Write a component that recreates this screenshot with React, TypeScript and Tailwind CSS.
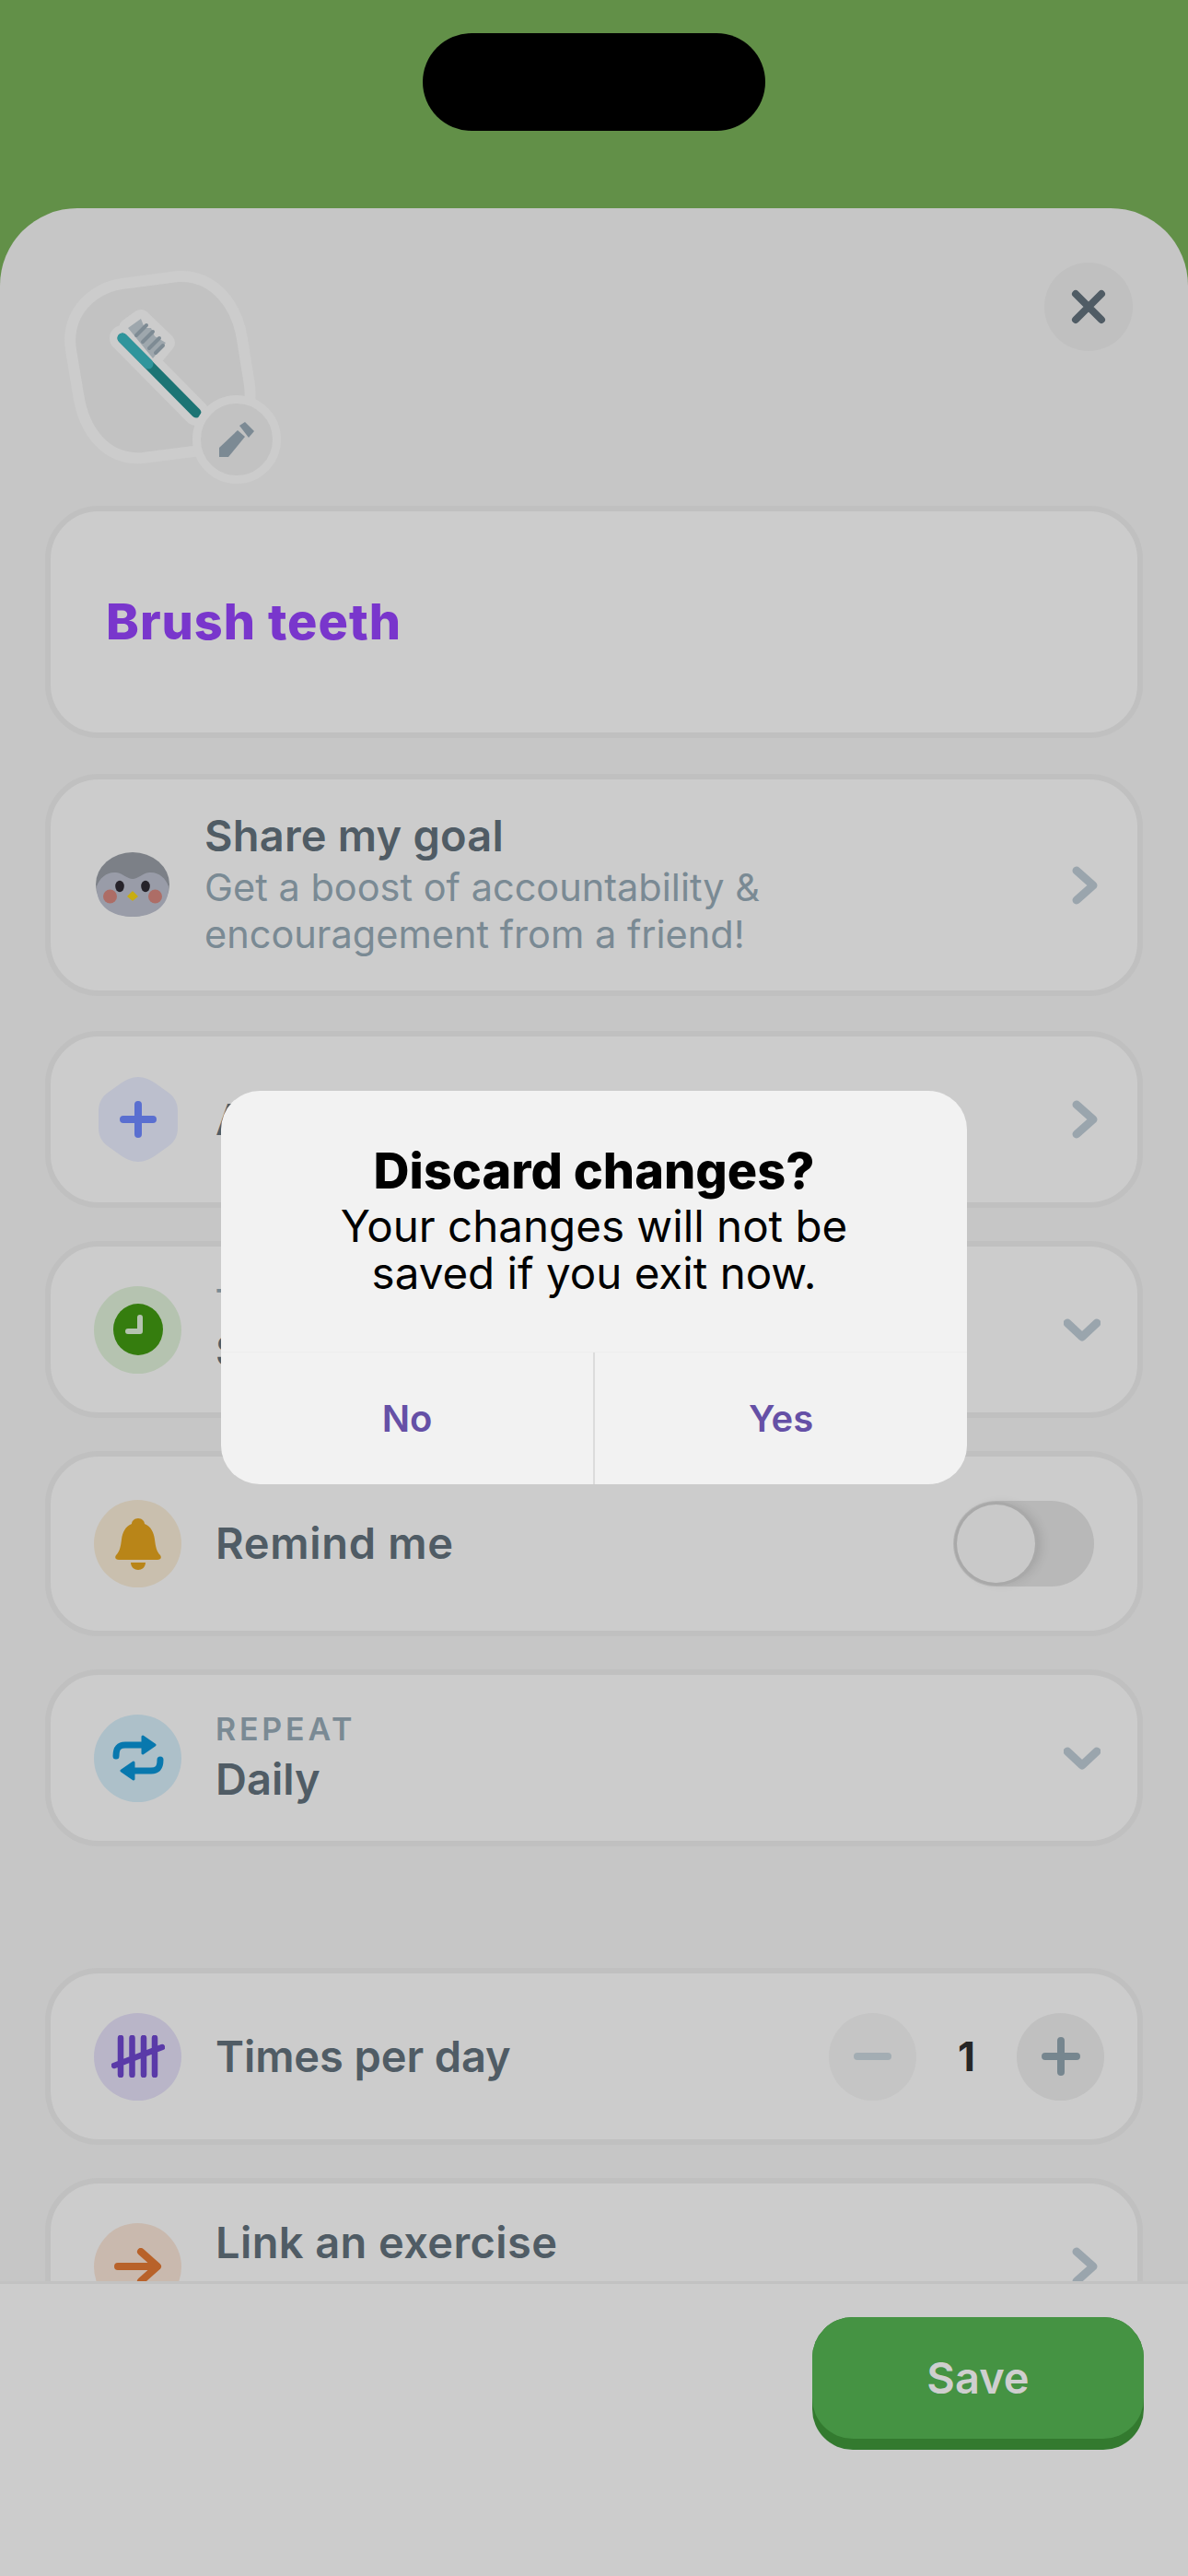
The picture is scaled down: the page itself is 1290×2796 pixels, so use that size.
import React from 'react';

const ChevronRight = () => (
  <svg width="28" height="42" viewBox="0 0 28 42" fill="none" className="shrink-0">
    <path d="M5 5 L23 21 L5 37" stroke="#9aa5ad" strokeWidth="9" strokeLinecap="round" strokeLinejoin="round" />
  </svg>
);

const ChevronDown = () => (
  <svg width="40" height="28" viewBox="0 0 40 28" fill="none" className="shrink-0 mt-[2px]">
    <path d="M4 6 L20 21 L36 6" stroke="#9aa5ad" strokeWidth="9" strokeLinecap="round" strokeLinejoin="round" />
  </svg>
);

const Emblem = () => (
  <svg width="260" height="260" viewBox="0 0 260 260" fill="none" className="shrink-0">
    <path
      d="M133 20 C172 18 197 50 203 88 L211 138 C216 180 190 205 150 210 L95 217 C55 220 31 188 25 148 L17 100 C11 58 42 30 80 27 Z"
      fill="#c2c2c2"
      stroke="#cccccc"
      strokeWidth="12"
    />
    <path d="M79 76 L93 66 L120 92 L106 109 Z" fill="#cccccc" stroke="#cccccc" strokeWidth="20" strokeLinejoin="round" />
    <path d="M73 87 L153 168" stroke="#cccccc" strokeWidth="28" strokeLinecap="round" />
    <path d="M79 76 L93 66 L97 76 L104 76 L108 85 L120 92 L106 109 Z" fill="#9ea7ad" />
    <path d="M88 84 L99 73 M95 91 L106 80 M102 98 L113 87 M109 103 L117 95" stroke="#7e8b94" strokeWidth="4" strokeLinecap="round" />
    <path d="M73 87 L153 168" stroke="#1c7474" strokeWidth="11" strokeLinecap="round" />
    <path d="M73 87 L101 115" stroke="#2f959c" strokeWidth="11" strokeLinecap="round" />
    <circle cx="197" cy="197" r="43.5" fill="#c2c2c2" stroke="#cccccc" strokeWidth="9" />
    <path d="M178 206 L198 187 L206 194 L188 216 L178 216 Z" fill="#7c8a94" />
    <path d="M200 182 L206 178 L216 188 L210 195 Z" fill="#7c8a94" />
  </svg>
);

const Penguin = () => (
  <svg width="80" height="71" viewBox="14 25 80 71" className="shrink-0">
    <ellipse cx="54" cy="60" rx="40" ry="35" fill="#7c8087" />
    <path d="M15 62 C18 53 26 46 36 47 C44 48 48 54 54 54 C60 54 64 48 72 47 C82 46 90 53 93 62 C94 84 76 95 54 95 C32 95 14 84 15 62 Z" fill="#999ca8" />
    <ellipse cx="40" cy="62" rx="4.8" ry="6.2" fill="#26232a" />
    <ellipse cx="68" cy="62" rx="4.8" ry="6.2" fill="#26232a" />
    <circle cx="29.5" cy="73" r="7.5" fill="#ad6d66" />
    <circle cx="78.5" cy="73" r="7.5" fill="#ad6d66" />
    <path d="M49 73 L54 68 L59 73 L54 77 Z" fill="#c8ad10" stroke="#c8ad10" strokeWidth="1.5" strokeLinejoin="round" />
  </svg>
);

const IconCircle = ({ bg, children }: { bg: string; children: React.ReactNode }) => (
  <div className={`w-[95px] h-[95px] rounded-full shrink-0 flex items-center justify-center ${bg}`}>{children}</div>
);

const Card = ({ className = '', children }: { className?: string; children: React.ReactNode }) => (
  <div className={`border-[6px] border-[#c0c0c0] bg-[#cccccc] rounded-[58px] flex items-center shrink-0 ${className}`}>
    {children}
  </div>
);

const StackedLabel = ({ label, value }: { label: string; value: string }) => (
  <div className="flex flex-col gap-[4px] ml-[37px] flex-1 -mt-[3px]">
    <span className="text-[34px] leading-[44px] font-semibold tracking-[3.800px] text-[#7a8a94]">{label}</span>
    <span className="text-[47px] leading-[56px] font-semibold text-[#505c65]">{value}</span>
  </div>
);

const titleText = 'ml-[37px] flex-1 text-[47px] font-semibold text-[#505c65]';

export default function App() {
  return (
    <div className="relative w-[1290px] h-[2796px] overflow-hidden bg-[#629048] flex flex-col font-[Inter,sans-serif]">
      {/* Status area */}
      <div className="h-[226px] shrink-0 flex justify-center pt-[36px]">
        <div className="w-[372px] h-[106px] rounded-full bg-black" />
      </div>

      {/* Sheet */}
      <div className="flex-1 min-h-0 flex flex-col bg-[#c6c6c6] rounded-t-[84px] overflow-hidden">
        <div className="flex-1 min-h-0 overflow-hidden px-[49px] pt-[54px] flex flex-col">
          <div className="flex justify-between items-start -mx-[49px] pl-[60px] pr-[60px] shrink-0">
            <Emblem />
            <div className="mt-[5px] w-[96px] h-[96px] rounded-full bg-[#c0c0c0] flex items-center justify-center">
              <svg width="44" height="44" viewBox="0 0 44 44" fill="none">
                <path d="M8 8 L36 36 M36 8 L8 36" stroke="#505c65" strokeWidth="8" strokeLinecap="round" />
              </svg>
            </div>
          </div>

          <Card className="h-[252px] mt-[9px] pl-[60px]">
            <span className="text-[54px] font-extrabold tracking-[1px] text-[#7936cc] -mt-[2px]">Brush teeth</span>
          </Card>

          <Card className="h-[241px] mt-[39px] pl-[49px] pr-[43px]">
            <Penguin />
            <div className="flex flex-col ml-[38px] flex-1 -mt-[1px]">
              <span className="text-[47px] leading-[52px] tracking-[0.200px] font-semibold text-[#505c65]">Share my goal</span>
              <span className="text-[41.500px] leading-[51px] mt-[5px] text-[#7a8a94]">
                Get a boost of accountability &amp;
                <br />
                encouragement from a friend!
              </span>
            </div>
            <ChevronRight />
          </Card>

          <Card className="h-[192px] mt-[38px] pl-[47px] pr-[43px]">
            <IconCircle bg="">
              <svg width="86" height="92" viewBox="0 0 86 92" fill="none">
                <path d="M43 0 C50 0 56 3 62 7 L76 17 C83 22 86 29 86 37 V55 C86 63 83 70 76 75 L62 85 C56 89 50 92 43 92 C36 92 30 89 24 85 L10 75 C3 70 0 63 0 55 V37 C0 29 3 22 10 17 L24 7 C30 3 36 0 43 0 Z" fill="#bcbfcd" />
                <path d="M43 30 V62 M27 46 H59" stroke="#5a6fd0" strokeWidth="8" strokeLinecap="round" />
              </svg>
            </IconCircle>
            <span className={titleText}>Add to a routine</span>
            <ChevronRight />
          </Card>

          <Card className="h-[192px] mt-[36px] pl-[47px] pr-[40px]">
            <IconCircle bg="bg-[#b5c3b0]">
              <svg width="54" height="56" viewBox="0 0 54 56" fill="none">
                <ellipse cx="27" cy="28" rx="27" ry="28" fill="#357d0e" />
                <path d="M29 15 V30 H16" stroke="#b5c3b0" strokeWidth="6" strokeLinecap="round" strokeLinejoin="round" />
              </svg>
            </IconCircle>
            <StackedLabel label="TIME" value="Set a time" />
            <ChevronDown />
          </Card>

          <Card className="h-[201px] mt-[36px] pl-[47px] pr-[47px]">
            <IconCircle bg="bg-[#c9bfae]">
              <svg width="50" height="56" viewBox="0 0 50 56" fill="#b98518">
                <path d="M25 0 C29 0 32 3 32 6 C39 9 42 15 43 23 C44 31 45 36 49 40 C51 43 49 45 46 45 H4 C1 45 -1 43 1 40 C5 36 6 31 7 23 C8 15 11 9 18 6 C18 3 21 0 25 0 Z" />
                <path d="M17 48 H33 C33 53 29 56 25 56 C21 56 17 53 17 48 Z" />
              </svg>
            </IconCircle>
            <span className={`${titleText} tracking-[0.700px]`}>Remind me</span>
            <div className="w-[153px] h-[93px] rounded-full bg-[#b8b8b8] flex items-center pl-[4px] shrink-0">
              <div className="w-[85px] h-[85px] rounded-full bg-[#c9c9c9] shadow-[0_0_0_3px_#a9a9a9,6px_0_12px_rgba(0,0,0,0.12)]" />
            </div>
          </Card>

          <Card className="h-[192px] mt-[36px] pl-[47px] pr-[40px]">
            <IconCircle bg="bg-[#adc0c9]">
              <svg width="56" height="50" viewBox="0 0 56 50" fill="none">
                <path d="M4 23 C4 13 8 11 14 11 H36 M52 27 C52 37 48 39 42 39 H20" stroke="#0878ae" strokeWidth="7" strokeLinecap="round" />
                <path d="M33 2 L46 11 L33 20 Z M23 30 L10 39 L23 48 Z" fill="#0878ae" stroke="#0878ae" strokeWidth="3" strokeLinejoin="round" />
              </svg>
            </IconCircle>
            <StackedLabel label="REPEAT" value="Daily" />
            <ChevronDown />
          </Card>

          <Card className="h-[192px] mt-[132px] pl-[47px] pr-[36px]">
            <IconCircle bg="bg-[#b9b5c8]">
              <svg width="58" height="46" viewBox="0 0 58 46" fill="none">
                <path d="M10 3 V43 M22.500 3 V43 M35 3 V43 M47 3 V43 M3 33 L55 13" stroke="#5a3aa8" strokeWidth="6.500" strokeLinecap="round" />
              </svg>
            </IconCircle>
            <span className={`${titleText} tracking-[-0.100px]`}>Times per day</span>
            <div className="w-[95px] h-[95px] rounded-full bg-[#c5c5c5] flex items-center justify-center shrink-0">
              <div className="w-[41px] h-[8px] rounded-full bg-[#a3adb3]" />
            </div>
            <span className="w-[109px] text-center text-[44px] font-bold text-[#262626]">1</span>
            <div className="w-[95px] h-[95px] rounded-full bg-[#c0c0c0] flex items-center justify-center shrink-0">
              <svg width="42" height="42" viewBox="0 0 42 42" fill="none">
                <path d="M21 4 V38 M4 21 H38" stroke="#76868f" strokeWidth="8" strokeLinecap="round" />
              </svg>
            </div>
          </Card>

          <Card className="h-[192px] mt-[36px] pl-[47px] pr-[43px]">
            <IconCircle bg="bg-[#c9b9ae]">
              <svg width="52" height="40" viewBox="0 0 52 40" fill="none">
                <path d="M4 20 H46 M29 4 L47 20 L29 36" stroke="#b8622a" strokeWidth="8" strokeLinecap="round" strokeLinejoin="round" />
              </svg>
            </IconCircle>
            <span className={`${titleText} tracking-[0.400px] mb-[52px]`}>Link an exercise</span>
            <ChevronRight />
          </Card>
        </div>

        {/* Footer */}
        <div className="h-[320px] shrink-0 bg-[#cccccc] border-t-[3px] border-[#c2c2c2] flex justify-end items-start pt-[36px] pr-[48px]">
          <div className="w-[360px] h-[144px] rounded-[44px] bg-[#337a2f] shrink-0">
            <div className="h-[132px] rounded-[44px] bg-[#459343] flex items-center justify-center text-[47px] font-semibold text-[#cfcfcf]">
              Save
            </div>
          </div>
        </div>
      </div>

      {/* Discard dialog */}
      <div className="absolute left-[240px] top-[1184px] w-[810px] h-[427px] rounded-[42px] bg-[#f2f2f2] flex flex-col">
        <div className="h-[283px] flex flex-col items-center pt-[57px] text-black">
          <span className="text-[54px] leading-[60px] font-extrabold">Discard changes?</span>
          <span className="text-[47.500px] leading-[51px] text-center mt-[4px]">
            Your changes will not be
            <br />
            saved if you exit now.
          </span>
        </div>
        <div className="flex-1 flex border-t border-[#ededed]">
          <div className="flex-1 flex items-center justify-center text-[40px] font-semibold text-[#6550a6] border-r-2 border-[#dcdcdc]">No</div>
          <div className="flex-1 flex items-center justify-center text-[40px] font-semibold text-[#6550a6]">Yes</div>
        </div>
      </div>
    </div>
  );
}
